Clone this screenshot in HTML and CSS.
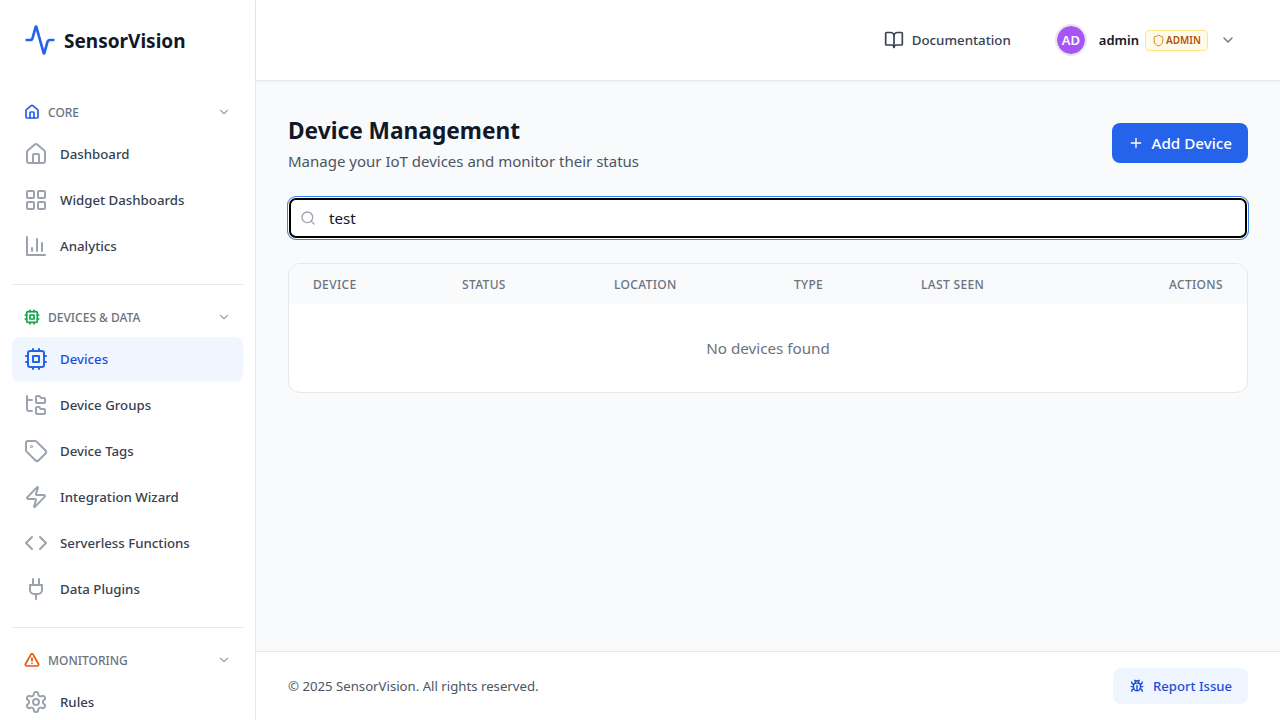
FILE: index.html
```html
<!DOCTYPE html>
<html lang="en">
<head>
    <meta charset="UTF-8">
    <meta name="viewport" content="width=device-width, initial-scale=1.0">
    <title>SensorVision - Devices</title>
    <link rel="stylesheet" href="styles.css">
</head>
<body>
    <svg class="icon-defs" xmlns="http://www.w3.org/2000/svg">
        <symbol id="i-activity" viewBox="0 0 24 24"><path d="M22 12h-2.48a2 2 0 0 0-1.93 1.46l-2.35 8.36a.25.25 0 0 1-.48 0L9.24 2.18a.25.25 0 0 0-.48 0l-2.35 8.36A2 2 0 0 1 4.49 12H2"/></symbol>
        <symbol id="i-home" viewBox="0 0 24 24"><path d="M15 21v-8a1 1 0 0 0-1-1h-4a1 1 0 0 0-1 1v8"/><path d="M3 10a2 2 0 0 1 .709-1.528l7-5.999a2 2 0 0 1 2.582 0l7 5.999A2 2 0 0 1 21 10v9a2 2 0 0 1-2 2H5a2 2 0 0 1-2-2z"/></symbol>
        <symbol id="i-chevron" viewBox="0 0 24 24"><path d="m6 9 6 6 6-6"/></symbol>
        <symbol id="i-grid" viewBox="0 0 24 24"><rect x="3" y="3" width="7" height="7" rx="1"/><rect x="14" y="3" width="7" height="7" rx="1"/><rect x="14" y="14" width="7" height="7" rx="1"/><rect x="3" y="14" width="7" height="7" rx="1"/></symbol>
        <symbol id="i-chart" viewBox="0 0 24 24"><path d="M3 3v18h18"/><path d="M18 17V9"/><path d="M13 17V5"/><path d="M8 17v-3"/></symbol>
        <symbol id="i-cpu" viewBox="0 0 24 24"><rect x="4" y="4" width="16" height="16" rx="2"/><rect x="9" y="9" width="6" height="6"/><path d="M15 2v2M15 20v2M2 15h2M2 9h2M20 15h2M20 9h2M9 2v2M9 20v2"/></symbol>
        <symbol id="i-folders" viewBox="0 0 24 24"><path d="M20 10a1 1 0 0 0 1-1V6a1 1 0 0 0-1-1h-2.5a1 1 0 0 1-.8-.4l-.9-1.2A1 1 0 0 0 15 3h-2a1 1 0 0 0-1 1v5a1 1 0 0 0 1 1Z"/><path d="M20 21a1 1 0 0 0 1-1v-3a1 1 0 0 0-1-1h-2.9a1 1 0 0 1-.88-.55l-.42-.85a1 1 0 0 0-.92-.6H13a1 1 0 0 0-1 1v5a1 1 0 0 0 1 1Z"/><path d="M3 5a2 2 0 0 0 2 2h3"/><path d="M3 3v13a2 2 0 0 0 2 2h3"/></symbol>
        <symbol id="i-tag" viewBox="0 0 24 24"><path d="M12.586 2.586A2 2 0 0 0 11.172 2H4a2 2 0 0 0-2 2v7.172a2 2 0 0 0 .586 1.414l8.704 8.704a2.426 2.426 0 0 0 3.42 0l6.58-6.58a2.426 2.426 0 0 0 0-3.42z"/><circle cx="7.5" cy="7.5" r=".5"/></symbol>
        <symbol id="i-zap" viewBox="0 0 24 24"><path d="M4 14a1 1 0 0 1-.78-1.63l9.9-10.2a.5.5 0 0 1 .86.46l-1.92 6.02A1 1 0 0 0 13 10h7a1 1 0 0 1 .78 1.63l-9.9 10.2a.5.5 0 0 1-.86-.46l1.92-6.02A1 1 0 0 0 11 14z"/></symbol>
        <symbol id="i-code" viewBox="0 0 24 24"><path d="m16 18 6-6-6-6"/><path d="m8 6-6 6 6 6"/></symbol>
        <symbol id="i-plug" viewBox="0 0 24 24"><path d="M12 22v-5"/><path d="M9 8V2"/><path d="M15 8V2"/><path d="M18 8v5a4 4 0 0 1-4 4h-4a4 4 0 0 1-4-4V8Z"/></symbol>
        <symbol id="i-alert" viewBox="0 0 24 24"><path d="m21.73 18-8-14a2 2 0 0 0-3.48 0l-8 14A2 2 0 0 0 4 21h16a2 2 0 0 0 1.73-3"/><path d="M12 9v4"/><path d="M12 17h.01"/></symbol>
        <symbol id="i-settings" viewBox="0 0 24 24"><path d="M12.22 2h-.44a2 2 0 0 0-2 2v.18a2 2 0 0 1-1 1.73l-.43.25a2 2 0 0 1-2 0l-.15-.08a2 2 0 0 0-2.73.73l-.22.38a2 2 0 0 0 .73 2.73l.15.1a2 2 0 0 1 1 1.72v.51a2 2 0 0 1-1 1.74l-.15.09a2 2 0 0 0-.73 2.73l.22.38a2 2 0 0 0 2.73.73l.15-.08a2 2 0 0 1 2 0l.43.25a2 2 0 0 1 1 1.73V20a2 2 0 0 0 2 2h.44a2 2 0 0 0 2-2v-.18a2 2 0 0 1 1-1.73l.43-.25a2 2 0 0 1 2 0l.15.08a2 2 0 0 0 2.73-.73l.22-.39a2 2 0 0 0-.73-2.73l-.15-.08a2 2 0 0 1-1-1.74v-.5a2 2 0 0 1 1-1.74l.15-.09a2 2 0 0 0 .73-2.73l-.22-.38a2 2 0 0 0-2.73-.73l-.15.08a2 2 0 0 1-2 0l-.43-.25a2 2 0 0 1-1-1.73V4a2 2 0 0 0-2-2z"/><circle cx="12" cy="12" r="3"/></symbol>
        <symbol id="i-book" viewBox="0 0 24 24"><path d="M12 7v14"/><path d="M3 18a1 1 0 0 1-1-1V4a1 1 0 0 1 1-1h5a4 4 0 0 1 4 4 4 4 0 0 1 4-4h5a1 1 0 0 1 1 1v13a1 1 0 0 1-1 1h-6a3 3 0 0 0-3 3 3 3 0 0 0-3-3z"/></symbol>
        <symbol id="i-shield" viewBox="0 0 24 24"><path d="M20 13c0 5-3.5 7.5-7.66 8.95a1 1 0 0 1-.67-.01C7.5 20.5 4 18 4 13V6a1 1 0 0 1 1-1c2 0 4.5-1.2 6.24-2.72a1.17 1.17 0 0 1 1.52 0C14.51 3.81 17 5 19 5a1 1 0 0 1 1 1z"/></symbol>
        <symbol id="i-plus" viewBox="0 0 24 24"><path d="M5 12h14"/><path d="M12 5v14"/></symbol>
        <symbol id="i-search" viewBox="0 0 24 24"><path d="m21 21-4.34-4.34"/><circle cx="11" cy="11" r="8"/></symbol>
        <symbol id="i-bug" viewBox="0 0 24 24"><path d="m8 2 1.88 1.88"/><path d="M14.12 3.88 16 2"/><path d="M9 7.13v-1a3.003 3.003 0 1 1 6 0v1"/><path d="M12 20c-3.3 0-6-2.7-6-6v-3a4 4 0 0 1 4-4h4a4 4 0 0 1 4 4v3c0 3.3-2.7 6-6 6"/><path d="M12 20v-9"/><path d="M6.53 9C4.6 8.8 3 7.1 3 5"/><path d="M6 13H2"/><path d="M3 21c0-2.1 1.7-3.9 3.8-4"/><path d="M20.97 5c0 2.1-1.6 3.8-3.5 4"/><path d="M22 13h-4"/><path d="M17.2 17c2.1.1 3.8 1.9 3.8 4"/></symbol>
    </svg>

    <div class="app">
        <aside class="sidebar">
            <div class="logo">
                <svg class="logo-icon"><use href="#i-activity"/></svg>
                <span>SensorVision</span>
            </div>
            <nav class="nav">
                <section class="nav-group">
                    <div class="nav-heading">
                        <svg class="heading-icon blue"><use href="#i-home"/></svg>
                        <span>Core</span>
                        <svg class="heading-chevron"><use href="#i-chevron"/></svg>
                    </div>
                    <a class="nav-item"><svg><use href="#i-home"/></svg>Dashboard</a>
                    <a class="nav-item"><svg><use href="#i-grid"/></svg>Widget Dashboards</a>
                    <a class="nav-item"><svg><use href="#i-chart"/></svg>Analytics</a>
                </section>
                <section class="nav-group">
                    <div class="nav-heading">
                        <svg class="heading-icon green"><use href="#i-cpu"/></svg>
                        <span>Devices &amp; Data</span>
                        <svg class="heading-chevron"><use href="#i-chevron"/></svg>
                    </div>
                    <a class="nav-item active"><svg><use href="#i-cpu"/></svg>Devices</a>
                    <a class="nav-item"><svg><use href="#i-folders"/></svg>Device Groups</a>
                    <a class="nav-item"><svg><use href="#i-tag"/></svg>Device Tags</a>
                    <a class="nav-item"><svg><use href="#i-zap"/></svg>Integration Wizard</a>
                    <a class="nav-item"><svg><use href="#i-code"/></svg>Serverless Functions</a>
                    <a class="nav-item"><svg><use href="#i-plug"/></svg>Data Plugins</a>
                </section>
                <section class="nav-group">
                    <div class="nav-heading">
                        <svg class="heading-icon orange"><use href="#i-alert"/></svg>
                        <span>Monitoring</span>
                        <svg class="heading-chevron"><use href="#i-chevron"/></svg>
                    </div>
                    <a class="nav-item"><svg><use href="#i-settings"/></svg>Rules</a>
                </section>
            </nav>
        </aside>

        <div class="content">
            <header class="topbar">
                <a class="doc-link"><svg><use href="#i-book"/></svg>Documentation</a>
                <div class="user">
                    <div class="avatar">AD</div>
                    <span class="user-name">admin</span>
                    <span class="role-badge"><svg><use href="#i-shield"/></svg>ADMIN</span>
                    <svg class="user-chevron"><use href="#i-chevron"/></svg>
                </div>
            </header>

            <main class="main">
                <div class="page-head">
                    <div>
                        <h1>Device Management</h1>
                        <p>Manage your IoT devices and monitor their status</p>
                    </div>
                    <button class="add-btn" type="button"><svg><use href="#i-plus"/></svg>Add Device</button>
                </div>

                <div class="search">
                    <svg><use href="#i-search"/></svg>
                    <span class="search-value">test</span>
                </div>

                <div class="table-card">
                    <table>
                        <thead>
                            <tr>
                                <th class="col-device">Device</th>
                                <th class="col-status">Status</th>
                                <th class="col-location">Location</th>
                                <th class="col-type">Type</th>
                                <th class="col-seen">Last Seen</th>
                                <th class="col-actions">Actions</th>
                            </tr>
                        </thead>
                        <tbody>
                            <tr><td colspan="6" class="empty">No devices found</td></tr>
                        </tbody>
                    </table>
                </div>
            </main>

            <footer class="footer">
                <p>&copy; 2025 SensorVision. All rights reserved.</p>
                <button class="report-btn" type="button"><svg><use href="#i-bug"/></svg>Report Issue</button>
            </footer>
        </div>
    </div>
</body>
</html>
```

FILE: styles.css
```css
* {
    box-sizing: border-box;
}
html, body {
    height: 100%;
    margin: 0;
    overflow: hidden;
}
body {
    font-family: "Noto Sans", "Liberation Sans", sans-serif;
    color: #111827;
    background-color: #f9fafb;
}
svg {
    fill: none;
    stroke: currentColor;
    stroke-width: 2;
    stroke-linecap: round;
    stroke-linejoin: round;
    flex-shrink: 0;
}
.icon-defs {
    display: none;
}
.app {
    display: flex;
    height: 720px;
}

/* sidebar */
.sidebar {
    width: 256px;
    flex-shrink: 0;
    background-color: #fff;
    border-right: 1px solid #e5e7eb;
    overflow: hidden;
}
.logo {
    display: flex;
    align-items: center;
    gap: 8px;
    height: 80px;
    padding-left: 24px;
    font-size: 19px;
    font-weight: 700;
}
.logo span {
    padding-top: 2px;
}
.logo-icon {
    width: 32px;
    height: 32px;
    color: #2563eb;
}
.nav {
    padding: 0 12px;
}
.nav-group {
    padding: 16px 0 14px;
    border-bottom: 1px solid #e5e7eb;
}
.nav-heading {
    display: flex;
    align-items: center;
    gap: 8px;
    height: 32px;
    padding: 0 12px;
    margin-bottom: 4px;
    font-size: 12px;
    font-weight: 500;
    text-transform: uppercase;
    color: #6b7280;
}
.heading-icon {
    width: 16px;
    height: 16px;
    stroke-width: 2.6;
}
.heading-chevron {
    width: 14px;
    height: 14px;
    margin-left: auto;
    color: #9ca3af;
}
.blue { color: #2563eb; }
.green { color: #16a34a; }
.orange { color: #ea580c; }
.nav-item {
    display: flex;
    align-items: center;
    gap: 12px;
    height: 44px;
    padding: 0 12px;
    margin-bottom: 2px;
    border-radius: 8px;
    font-size: 13.25px;
    font-weight: 500;
    color: #374151;
}
.nav-item svg {
    width: 24px;
    height: 24px;
    color: #9ca3af;
}
.nav-item.active {
    background-color: #eff6ff;
    color: #1d4ed8;
    box-shadow: 0 1px 2px rgba(0,0,0,0.03);
}
.nav-item.active svg {
    color: #2563eb;
}

/* right side */
.content {
    flex: 1;
    display: flex;
    flex-direction: column;
    min-width: 0;
}
.topbar {
    display: flex;
    justify-content: flex-end;
    align-items: center;
    height: 81px;
    padding-right: 44px;
    background-color: #fff;
    border-bottom: 1px solid #e5e7eb;
    box-shadow: 0 1px 2px rgba(0,0,0,0.05);
}
.doc-link {
    display: flex;
    align-items: center;
    gap: 8px;
    margin-right: 44px;
    font-size: 13.3px;
    font-weight: 500;
    color: #374151;
}
.doc-link svg {
    width: 20px;
    height: 20px;
}
.user {
    display: flex;
    align-items: center;
}
.avatar {
    display: flex;
    align-items: center;
    justify-content: center;
    width: 32px;
    height: 32px;
    border-radius: 50%;
    border: 2px solid #e5e7eb;
    background-color: #a855f7;
    background-clip: padding-box;
    color: #fff;
    font-size: 13px;
    font-weight: 600;
    margin-right: 12px;
}
.user-name {
    font-size: 13px;
    font-weight: 600;
    margin-right: 6px;
}
.role-badge {
    display: flex;
    align-items: center;
    gap: 1px;
    height: 21px;
    padding: 0 6px;
    border: 1px solid #fde68a;
    border-radius: 4px;
    background-color: #fffbeb;
    color: #b45309;
    font-size: 10px;
    font-weight: 600;
}
.role-badge svg {
    width: 13px;
    height: 13px;
    stroke-width: 1.7;
    color: #d97706;
}
.user-chevron {
    width: 16px;
    height: 16px;
    margin-left: 12px;
    color: #6b7280;
}

.main {
    flex: 1;
    padding: 32px;
}
.page-head {
    display: flex;
    justify-content: space-between;
    align-items: center;
    margin-bottom: 24px;
}
.page-head h1 {
    margin: 0;
    font-size: 22.7px;
    line-height: 36px;
    font-weight: 700;
}
.page-head p {
    margin: 0;
    font-size: 15px;
    line-height: 24px;
    color: #4b5563;
}
.add-btn {
    display: flex;
    align-items: center;
    gap: 7px;
    height: 40px;
    padding: 0 16px;
    border: none;
    border-radius: 8px;
    background-color: #2563eb;
    color: #fff;
    font-family: inherit;
    font-size: 15.2px;
    font-weight: 500;
}
.add-btn svg {
    width: 16px;
    height: 16px;
}
.search {
    display: flex;
    align-items: center;
    gap: 13px;
    height: 42px;
    padding: 0 12px;
    background-color: #fff;
    border-radius: 8px;
    box-shadow: 0 0 0 1px #3b82f6, inset 0 0 0 1px #fff, inset 0 0 0 3px #000;
    margin-bottom: 24px;
}
.search svg {
    width: 16px;
    height: 16px;
    color: #9ca3af;
}
.search-value {
    font-size: 15.2px;
    color: #111827;
}
.table-card {
    background-color: #fff;
    border: 1px solid #e5e7eb;
    border-radius: 12px;
    overflow: hidden;
}
table {
    width: 100%;
    border-collapse: collapse;
    table-layout: fixed;
}
th {
    height: 40px;
    padding: 0 24px;
    background-color: #f9fafb;
    text-align: left;
    font-size: 12px;
    font-weight: 500;
    letter-spacing: 0.35px;
    text-transform: uppercase;
    color: #6b7280;
}
.col-device { width: 149px; }
.col-status { width: 152px; }
.col-location { width: 180px; }
.col-type { width: 127px; }
.col-seen { width: 200px; }
th.col-actions {
    text-align: right;
}
.empty {
    height: 88px;
    text-align: center;
    font-size: 15.2px;
    color: #6b7280;
}

.footer {
    display: flex;
    justify-content: space-between;
    align-items: center;
    height: 69px;
    padding: 0 32px;
    background-color: #fff;
    border-top: 1px solid #e5e7eb;
}
.footer p {
    margin: 0;
    font-size: 13.2px;
    color: #4b5563;
}
.report-btn {
    display: flex;
    align-items: center;
    gap: 9px;
    height: 36px;
    padding: 0 16px 0 17px;
    border: none;
    border-radius: 8px;
    background-color: #eff6ff;
    color: #1d4ed8;
    font-family: inherit;
    font-size: 13.1px;
    font-weight: 500;
}
.report-btn svg {
    width: 14px;
    height: 14px;
    stroke-width: 2.4;
}
```
